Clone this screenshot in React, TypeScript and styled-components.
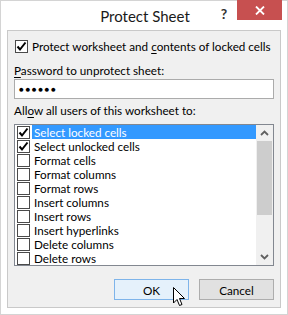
import React from 'react';
import styled, { createGlobalStyle } from 'styled-components';

const GlobalStyle = createGlobalStyle`
    html, body {
        margin: 0;
        padding: 0;
        background: #ffffff;
    }
    body {
        font-family: Lato, 'Liberation Sans', sans-serif;
        font-size: 11.7px;
        color: #000000;
    }
`;

const Window = styled.div`
    position: relative;
    width: 288px;
    height: 315px;
    box-sizing: border-box;
    border: 1px solid #d4d4d4;
    background: #ffffff;
    display: flex;
    flex-direction: column;
`;

const TitleBar = styled.div`
    display: flex;
    align-items: flex-start;
    height: 29px;
    flex-shrink: 0;
`;

const Title = styled.div`
    flex: 1;
    padding-left: 75px;
    text-align: center;
    font-size: 15px;
    line-height: 15px;
    padding-top: 8px;
    color: #1a1a1a;
`;

const HelpButton = styled.div`
    width: 20px;
    padding-top: 4px;
    font-size: 14px;
    font-weight: bold;
    color: #333333;
    text-align: center;
    margin-right: 3px;
`;

const CloseButton = styled.div`
    width: 45px;
    height: 20px;
    margin-top: -1px;
    margin-right: 5px;
    background: #c75050;
    display: flex;
    align-items: center;
    justify-content: center;
`;

const Client = styled.div`
    flex: 1;
    margin: 0 6px 6px 6px;
    border: 1px solid #c9c9c9;
    background: #f0f0f0;
    padding: 0 6px;
    display: flex;
    flex-direction: column;
`;

const CheckRow = styled.label`
    display: flex;
    align-items: center;
    height: 16px;
    margin-top: 7px;
    gap: 4px;
    white-space: nowrap;
`;

const Box = styled.span<{ $dense?: boolean }>`
    width: 11px;
    height: 11px;
    flex-shrink: 0;
    border: 1px solid #4a4a4a;
    background: #ffffff;
    display: flex;
    align-items: center;
    justify-content: center;
    margin-left: ${(p) => (p.$dense ? '2px' : '1px')};
`;

const Label = styled.div<{ $top: number }>`
    margin-top: ${(p) => p.$top}px;
    line-height: 16px;
    white-space: nowrap;
`;

const Key = styled.span`
    text-decoration: underline;
    text-underline-offset: 2px;
`;

const PasswordBox = styled.div`
    margin-top: 1px;
    height: 18px;
    border: 1px solid #ababab;
    background: #ffffff;
    display: flex;
    align-items: center;
    padding-left: 4px;
    font-size: 8px;
    letter-spacing: 1.6px;
`;

const ListBox = styled.div`
    margin-top: 6px;
    height: 140px;
    border: 1px solid #828790;
    background: #ffffff;
    display: flex;
`;

const Items = styled.div`
    flex: 1;
    display: flex;
    flex-direction: column;
`;

const Item = styled.div`
    height: 14px;
    display: flex;
    align-items: center;
    gap: 2px;
`;

const ItemText = styled.span<{ $selected?: boolean }>`
    flex: 1;
    height: 14px;
    line-height: 14px;
    padding-left: 2px;
    white-space: nowrap;
    background: ${(p) => (p.$selected ? '#3399ff' : 'transparent')};
    color: ${(p) => (p.$selected ? '#ffffff' : '#000000')};
`;

const ScrollBar = styled.div`
    width: 17px;
    background: #f0f0f0;
    display: flex;
    flex-direction: column;
`;

const ArrowButton = styled.div`
    height: 16px;
    display: flex;
    align-items: center;
    justify-content: center;
`;

const Thumb = styled.div`
    height: 74px;
    margin: 0 1px;
    background: #cdcdcd;
`;

const Track = styled.div`
    flex: 1;
`;

const ButtonRow = styled.div`
    margin-top: 13px;
    display: flex;
    justify-content: flex-end;
    gap: 10px;
`;

const Button = styled.div<{ $hover?: boolean }>`
    width: 73px;
    height: 19px;
    border: 1px solid ${(p) => (p.$hover ? '#7eb4ea' : '#adadad')};
    background: ${(p) => (p.$hover ? '#e5f1fb' : '#e1e1e1')};
    display: flex;
    align-items: center;
    justify-content: center;
`;

const Cursor = styled.svg`
    position: absolute;
    left: 172px;
    top: 286px;
`;

const Tick = () => (
    <svg width="11" height="11" viewBox="0 0 11 11">
        <path d="M1.5 5.5 L4 8.5 L9.5 1.5" fill="none" stroke="#000" strokeWidth="2" />
    </svg>
);

const Chevron = ({ down }: { down?: boolean }) => (
    <svg width="9" height="6" viewBox="0 0 9 6">
        <path
            d={down ? 'M1 1 L4.5 4.5 L8 1' : 'M1 5 L4.5 1.5 L8 5'}
            fill="none"
            stroke="#606060"
            strokeWidth="1.8"
        />
    </svg>
);

const permissions = [
    { text: 'Select locked cells', checked: true, selected: true },
    { text: 'Select unlocked cells', checked: true },
    { text: 'Format cells' },
    { text: 'Format columns' },
    { text: 'Format rows' },
    { text: 'Insert columns' },
    { text: 'Insert rows' },
    { text: 'Insert hyperlinks' },
    { text: 'Delete columns' },
    { text: 'Delete rows' },
];

const App = () => (
    <Window>
        <GlobalStyle />
        <TitleBar>
            <Title>Protect Sheet</Title>
            <HelpButton>?</HelpButton>
            <CloseButton>
                <svg width="10" height="9" viewBox="0 0 10 9">
                    <path d="M1 0.5 L9 8.5 M9 0.5 L1 8.5" stroke="#fff" strokeWidth="1.8" />
                </svg>
            </CloseButton>
        </TitleBar>
        <Client>
            <CheckRow>
                <Box>
                    <Tick />
                </Box>
                <span>
                    Protect worksheet and <Key>c</Key>ontents of locked cells
                </span>
            </CheckRow>
            <Label $top={8}>
                <Key>P</Key>assword to unprotect sheet:
            </Label>
            <PasswordBox>●●●●●●</PasswordBox>
            <Label $top={3}>
                All<Key>o</Key>w all users of this worksheet to:
            </Label>
            <ListBox>
                <Items>
                    {permissions.map((p) => (
                        <Item key={p.text}>
                            <Box $dense>{p.checked && <Tick />}</Box>
                            <ItemText $selected={p.selected}>{p.text}</ItemText>
                        </Item>
                    ))}
                </Items>
                <ScrollBar>
                    <ArrowButton>
                        <Chevron />
                    </ArrowButton>
                    <Thumb />
                    <Track />
                    <ArrowButton>
                        <Chevron down />
                    </ArrowButton>
                </ScrollBar>
            </ListBox>
            <ButtonRow>
                <Button $hover>OK</Button>
                <Button>Cancel</Button>
            </ButtonRow>
        </Client>
        <Cursor width="13" height="20" viewBox="0 0 13 20">
            <path
                d="M0.5 0.5 L0.5 16 L4 12.5 L6.5 18.5 L9 17.5 L6.5 11.5 L11.5 11.5 Z"
                fill="#fff"
                stroke="#000"
                strokeWidth="1"
            />
        </Cursor>
    </Window>
);

export default App;
